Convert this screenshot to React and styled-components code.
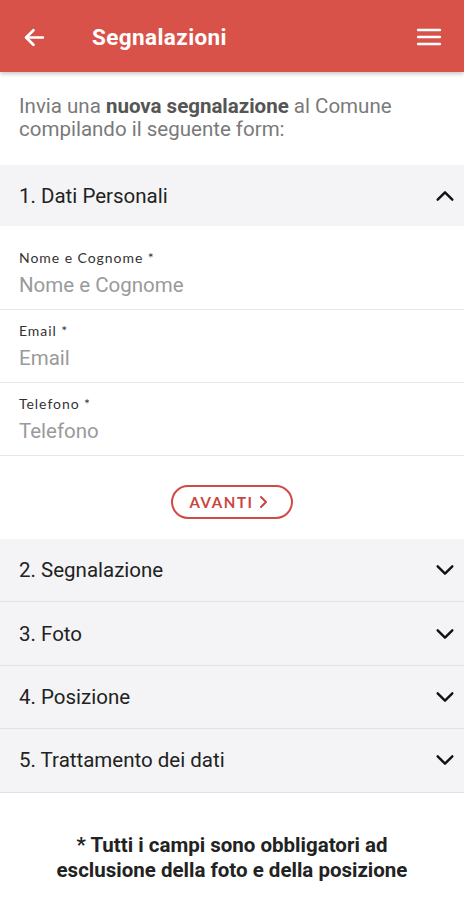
import React from "react";
import styled, { createGlobalStyle } from "styled-components";

const Global = createGlobalStyle`
  html, body { margin: 0; padding: 0; background: #fff; }
  body { font-family: Roboto, "Noto Sans", Arial, sans-serif; -webkit-font-smoothing: antialiased; }
  * { box-sizing: border-box; }
`;

const Page = styled.div`
  width: 464px;
  min-height: 900px;
  background: #fff;
  overflow: hidden;
`;

const Header = styled.header`
  height: 72px;
  background: #d8524a;
  display: flex;
  align-items: center;
  padding: 2px 22px 0 22px;
  box-shadow: 0 2px 4px rgba(0, 0, 0, 0.22);
  position: relative;
  z-index: 1;
`;

const IconBtn = styled.span`
  display: flex;
  align-items: center;
  justify-content: center;
  color: #fff;
`;

const Title = styled.h1`
  margin: 0 0 0 45px;
  flex: 1;
  color: #fff;
  font-size: 22.5px;
  font-weight: 700;
  letter-spacing: 0.4px;
`;

const Intro = styled.p`
  margin: 0;
  padding: 23px 19px 24px;
  font-size: 20.5px;
  line-height: 23px;
  color: #7a7a7a;
  b { color: #555; font-weight: 700; }
`;

const SectionHead = styled.div`
  height: ${(p) => (p.$first ? "61px" : "63.4px")};
  background: #f4f4f6;
  display: flex;
  align-items: center;
  justify-content: space-between;
  padding: 0 8px 0 19px;
  font-size: 20.5px;
  color: #222;
  border-bottom: ${(p) => (p.$first ? "none" : "1px solid #e2e2e4")};
`;

const Fields = styled.div`
  padding-top: 11px;
`;

const Field = styled.div`
  padding: 13px 19px 12px;
  border-bottom: 1px solid #e6e6e6;
`;

const Label = styled.div`
  font-family: Lato, "Open Sans", sans-serif;
  font-size: 14px;
  line-height: 16px;
  letter-spacing: 0.95px;
  color: #333;
`;

const Placeholder = styled.div`
  margin-top: 7px;
  font-size: 20.5px;
  line-height: 24px;
  color: #9a9a9a;
`;

const ButtonRow = styled.div`
  display: flex;
  justify-content: center;
  padding: 29px 0 20px;
`;

const NextButton = styled.button`
  width: 122px;
  height: 34px;
  border: 2px solid #cf4b45;
  border-radius: 17px;
  background: #fff;
  color: #c9463f;
  font-family: Lato, "Open Sans", sans-serif;
  font-weight: 700;
  font-size: 15px;
  letter-spacing: 1.6px;
  display: flex;
  align-items: center;
  justify-content: center;
  gap: 4px;
  padding: 0 6px 0 0;
`;

const Footer = styled.p`
  margin: 0;
  padding: 40px 10px 16px;
  text-align: center;
  font-size: 20.5px;
  line-height: 25px;
  font-weight: 700;
  color: #222;
`;

const Chevron = ({ up }) => (
  <svg width="22" height="22" viewBox="0 0 24 24" fill="none" stroke="#111" strokeWidth="2.6" strokeLinecap="round" strokeLinejoin="round">
    {up ? <polyline points="4 16 12 8 20 16" /> : <polyline points="4 8 12 16 20 8" />}
  </svg>
);

const sections = ["2. Segnalazione", "3. Foto", "4. Posizione", "5. Trattamento dei dati"];
const fields = ["Nome e Cognome", "Email", "Telefono"];

export default function App() {
  return (
    <Page>
      <Global />
      <Header>
        <IconBtn>
          <svg width="25" height="25" viewBox="0 0 24 24" fill="none" stroke="#fff" strokeWidth="2.6" strokeLinecap="round" strokeLinejoin="round">
            <line x1="20" y1="12" x2="4" y2="12" />
            <polyline points="11 5 4 12 11 19" />
          </svg>
        </IconBtn>
        <Title>Segnalazioni</Title>
        <IconBtn>
          <svg width="26" height="26" viewBox="0 0 24 24" fill="none" stroke="#fff" strokeWidth="2.4" strokeLinecap="round">
            <line x1="2" y1="5.5" x2="22" y2="5.5" />
            <line x1="2" y1="12" x2="22" y2="12" />
            <line x1="2" y1="18.5" x2="22" y2="18.5" />
          </svg>
        </IconBtn>
      </Header>
      <Intro>
        Invia una <b>nuova segnalazione</b> al Comune compilando il seguente form:
      </Intro>
      <SectionHead $first>
        <span>1. Dati Personali</span>
        <Chevron up />
      </SectionHead>
      <Fields>
        {fields.map((f) => (
          <Field key={f}>
            <Label>{f} *</Label>
            <Placeholder>{f}</Placeholder>
          </Field>
        ))}
      </Fields>
      <ButtonRow>
        <NextButton>
          AVANTI
          <svg width="11" height="14" viewBox="0 0 11 14" fill="none" stroke="#c9463f" strokeWidth="2" strokeLinecap="round" strokeLinejoin="round">
            <polyline points="3 2 8 7 3 12" />
          </svg>
        </NextButton>
      </ButtonRow>
      {sections.map((s) => (
        <SectionHead key={s}>
          <span>{s}</span>
          <Chevron />
        </SectionHead>
      ))}
      <Footer>
        * Tutti i campi sono obbligatori ad
        <br />
        esclusione della foto e della posizione
      </Footer>
    </Page>
  );
}
